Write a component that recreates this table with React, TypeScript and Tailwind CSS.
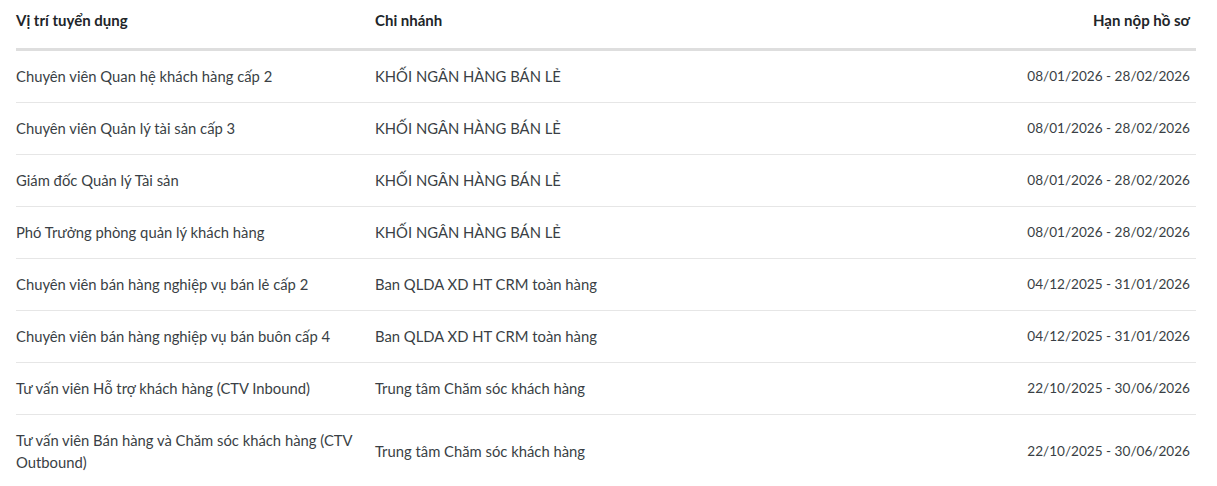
import React from "react";

const rows: [string, string, string][] = [
  ["Chuyên viên Quan hệ khách hàng cấp 2", "KHỐI NGÂN HÀNG BÁN LẺ", "08/01/2026 - 28/02/2026"],
  ["Chuyên viên Quản lý tài sản cấp 3", "KHỐI NGÂN HÀNG BÁN LẺ", "08/01/2026 - 28/02/2026"],
  ["Giám đốc Quản lý Tài sản", "KHỐI NGÂN HÀNG BÁN LẺ", "08/01/2026 - 28/02/2026"],
  ["Phó Trưởng phòng quản lý khách hàng", "KHỐI NGÂN HÀNG BÁN LẺ", "08/01/2026 - 28/02/2026"],
  ["Chuyên viên bán hàng nghiệp vụ bán lẻ cấp 2", "Ban QLDA XD HT CRM toàn hàng", "04/12/2025 - 31/01/2026"],
  ["Chuyên viên bán hàng nghiệp vụ bán buôn cấp 4", "Ban QLDA XD HT CRM toàn hàng", "04/12/2025 - 31/01/2026"],
  ["Tư vấn viên Hỗ trợ khách hàng (CTV Inbound)", "Trung tâm Chăm sóc khách hàng", "22/10/2025 - 30/06/2026"],
  ["Tư vấn viên Bán hàng và Chăm sóc khách hàng (CTV Outbound)", "Trung tâm Chăm sóc khách hàng", "22/10/2025 - 30/06/2026"],
];

export default function App() {
  return (
    <div className="bg-white w-[1217px] h-[486px] overflow-hidden px-4" style={{ fontFamily: "Lato, 'Noto Sans', sans-serif" }}>
      <table className="w-[1180px] table-fixed border-collapse text-[14.8px]">
        <colgroup>
          <col className="w-[359px]" />
          <col className="w-[500px]" />
          <col />
        </colgroup>
        <thead>
          <tr className="border-b-[3px] border-[#dedede]">
            <th className="h-[49px] pb-[7px] text-left font-bold text-[15px] text-[#212529] pr-4">Vị trí tuyển dụng</th>
            <th className="h-[49px] pb-[7px] text-left font-bold text-[15px] text-[#212529]">Chi nhánh</th>
            <th className="h-[49px] pb-[7px] text-right font-bold text-[15px] text-[#212529] pr-[6px]">Hạn nộp hồ sơ</th>
          </tr>
        </thead>
        <tbody>
          {rows.map((r, i) => (
            <tr key={i} className={i < rows.length - 1 ? "border-b border-[#e6e6e6]" : ""}>
              <td className="pt-[14px] pb-[15px] leading-[22px] text-[#3a3f45] pr-4">{r[0]}</td>
              <td className="pt-[14px] pb-[15px] leading-[22px] text-[#3a3f45]">{r[1]}</td>
              <td className="pt-[14px] pb-[15px] leading-[22px] text-[13.6px] text-[#3a3f45] text-right pr-[6px]">{r[2]}</td>
            </tr>
          ))}
        </tbody>
      </table>
    </div>
  );
}
